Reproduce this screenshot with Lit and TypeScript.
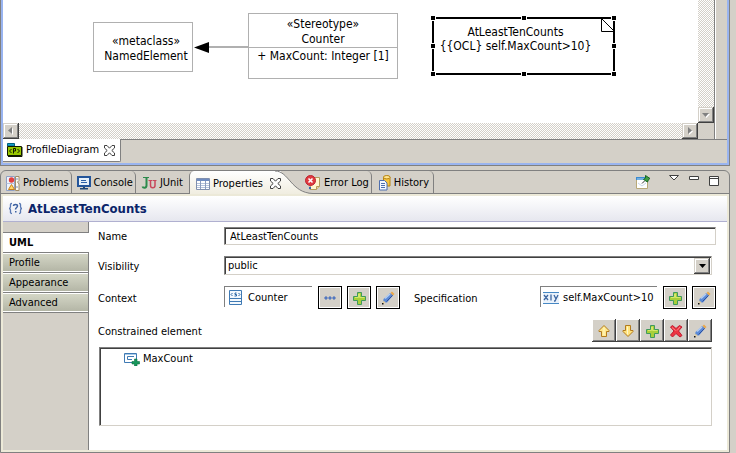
import { LitElement, html, css, svg, TemplateResult } from "lit";
import { customElement, state } from "lit/decorators.js";

const icon = (w: number, h: number, body: TemplateResult) =>
  html`<svg width=${w} height=${h} viewBox="0 0 ${w} ${h}" aria-hidden="true">${body}</svg>`;

const closeIcon = icon(11, 11, svg`
  <path d="M.5 .5h2.500L5.500 3.200 8 .500h2.500v2.500L7.800 5.500l2.700 2.500v2.500H8L5.500 7.800 3 10.500H.500V8l2.700-2.500L.500 3z" fill="#fff" stroke="#404040"/>`);

const plusIcon = icon(14, 14, svg`
  <path d="M5.500 1.500h4v4h4v4h-4v4h-4v-4h-4v-4h4z" fill="#a8cf38" stroke="#3f9a5c"/>
  <path d="M6.500 3v3.500H3M7.500 2.500v4h5" fill="none" stroke="#d5e86a"/>`);

const pencilIcon = icon(14, 14, svg`
  <path d="M2 11.500l.5-3.500 7-6 2.500 2.500-6 7z" fill="#5b8ad8"/>
  <path d="M4 7.500l5.500-5" stroke="#b5cef2" stroke-width="1.500"/>
  <path d="M5.500 10.500l6.500-6.500" stroke="#2f519c"/>
  <path d="M9.500 2l1.500-1.500 2.500 2.500-1.500 1.500z" fill="#eaa84a"/>
  <path d="M9 2.500l2.500 2.500" stroke="#7088b8"/>
  <path d="M2.500 9.500l2 2-3 1.500z" fill="#e6cf9c"/>
  <path d="M1 12h1.500v1.500H1z" fill="#111"/>`);

const dotsIcon = icon(14, 14, svg`
  <g fill="#7da3e6" stroke="#2d55a8" stroke-width=".8"><circle cx="3" cy="7" r="1.200"/><circle cx="7" cy="7" r="1.200"/><circle cx="11" cy="7" r="1.200"/></g>`);

const upIcon = icon(14, 14, svg`
  <path d="M7 1.500l5 5v1h-2.500v5h-5v-5H2v-1z" fill="#ffe88c" stroke="#b27a1c"/>
  <path d="M7 3.500v8" stroke="#fff8cc"/>`);

const downIcon = icon(14, 14, svg`
  <path d="M7 12.500l5-5v-1h-2.500v-5h-5v5H2v1z" fill="#ffe27c" stroke="#b27a1c"/>
  <path d="M6.500 2.500v8" stroke="#fff8cc"/>`);

const crossIcon = icon(14, 14, svg`
  <path d="M1.500 3l2-1.500L7 4.500l3.500-3 2.500 1.500-3.500 4 3.500 4.500-2 1.500L7 9.500l-3.500 3.500-2-2L5 7z" fill="#ee3440" stroke="#c01c30"/>
  <path d="M3 3.500l3.500 3M11 3l-3 3.500" stroke="#ff8a8a"/>`);

const profileIcon = icon(16, 14, svg`
  <path d="M.5 3V.5h7V3z" fill="#18a0c8" stroke="#006080"/>
  <path d="M.5 3.500h14v9H.5z" fill="#98c800" stroke="#101800"/>
  <path d="M15 4v9.500H1" fill="none" stroke="#101800"/>
  <path d="M4.500 6l-2 2 2 2M10.500 6l2 2-2 2M6.500 10.500v-5h2v2.500h-2" fill="none" stroke="#101800"/>`);

const problemsIcon = icon(14, 15, svg`
  <path d="M.5 .5h8v14h-8z" fill="#eef3fb" stroke="#8fa0c4"/>
  <path d="M.5 7.500h8" stroke="#b7c3dc"/>
  <path d="M9.500 .5h3.500v4l-1.500 1.500 1.500 2v6.500H9.500z" fill="#fdfbf2" stroke="#a08c68"/>
  <circle cx="5.500" cy="4" r="2.700" fill="#e24040"/>
  <path d="M5.500 8.500l3 5h-6z" fill="#ffd86a" stroke="#c8811c"/>
  <path d="M10 3h2M10 11h2" stroke="#7a92cc"/>`);

const consoleIcon = icon(14, 14, svg`
  <path d="M1 1h12v9H1z" fill="#e6f1fb" stroke="#24559a" stroke-width="2"/>
  <path d="M4 4.500h5M4 6.500h6" stroke="#2e62a8"/>
  <path d="M6 11h2v1h3v1.500H3V12h3z" fill="#204878"/>`);

const junitIcon = icon(16, 14, svg`
  <path d="M2 1.500h6M3 12.500" stroke="#2c8a4c"/>
  <path d="M5.500 2v7.500c0 3-3.500 2.500-4 1" fill="none" stroke="#2c8a4c" stroke-width="2"/>
  <path d="M7.500 4.500h4M12 4.500h3.500" stroke="#c8485c"/>
  <path d="M9.500 5v4.500c0 3 4.500 3 4.500 0V5" fill="none" stroke="#c8485c" stroke-width="1.500"/>`);

const tableIcon = icon(14, 12, svg`
  <path d="M.5 .5h13v11H.5z" fill="#fff" stroke="#7f8fae"/>
  <path d="M1 1h12v2H1z" fill="#6f8cc0"/>
  <path d="M1 5.500h12M1 7.500h12M1 9.500h12" stroke="#b3c2dc"/>
  <path d="M4.500 3v8M9.500 3v8" stroke="#8c9dbd"/>`);

const errorIcon = icon(16, 16, svg`
  <path d="M6 2.500h8.500v9l-3 3H5z" fill="#fff7cf" stroke="#b49a5c"/>
  <path d="M11.500 14.500v-3h3" fill="#e8d79a" stroke="#b49a5c"/>
  <circle cx="5.500" cy="5.500" r="5" fill="#e03a40" stroke="#bd2430"/>
  <path d="M3.500 3.500l4 4M7.500 3.500l-4 4" stroke="#fff" stroke-width="1.600"/>
  <path d="M4 12h2v2H4z" fill="#3a64b0"/>`);

const historyIcon = icon(12, 16, svg`
  <path d="M4.500 2v9h6.500V2z" fill="#f6c33c" stroke="#b88412"/>
  <ellipse cx="7.800" cy="2.200" rx="3.300" ry="1.700" fill="#ffe690" stroke="#b88412"/>
  <path d="M.5 5.500h5l2.500 2.500v7H.5z" fill="#f4f8ff" stroke="#4f6fae"/>
  <path d="M2 8.500h4M2 10.500h4M2 12.500h4" stroke="#4f6fae"/>`);

const pinIcon = icon(15, 14, svg`
  <path d="M.5 3.500h11v10H.5z" fill="#fff" stroke="#b8a878"/>
  <path d="M0 2h10v3H0z" fill="#3b8ad0"/><path d="M1 4h8" stroke="#a8d4f4"/>
  <path d="M2 8l4 3 4-3" fill="none" stroke="#c7d7ec"/>
  <path d="M9.500 .5l4.500 3-1.500 1-1 2.500L7.500 4.500l2-1.500z" fill="#3f9f42" stroke="#176624"/>
  <path d="M8.500 6L6 8.500" stroke="#333"/>`);

const braceIcon = icon(15, 13, svg`
  <g fill="none" stroke="#5878b4" stroke-width="1.300"><path d="M4 1.500c-2 0-1.500 1-1.500 3 0 1.200-.5 2-1.500 2 1 0 1.500.8 1.500 2 0 2-.5 3 1.500 3"/>
  <path d="M11 1.500c2 0 1.500 1 1.500 3 0 1.200.5 2 1.500 2-1 0-1.500.8-1.500 2 0 2 .5 3-1.500 3"/>
  <path d="M5.500 4c0-2 4-2 4 0 0 1.500-2 1.500-2 3.500" stroke="#3f62a2" stroke-width="1.500"/></g>
  <path d="M7 9h1.500v1.500H7z" fill="#3f62a2"/>`);

const stereotypeIcon = icon(13, 15, svg`
  <path d="M.5 .5h12v14H.5z" fill="#f3f9fe" stroke="#3f7ab4"/>
  <path d="M1 8.500h11M1 11.500h11" stroke="#3f7ab4"/>
  <path d="M3.500 3l-1.500 1.500 1.500 1.500M9.500 3L11 4.500 9.500 6M7.500 3h-1.500v1.500h1.500V6H5.500" fill="none" stroke="#2764a4"/>`);

const expressionIcon = icon(16, 12, svg`
  <path d="M0 0h16v12H0z" fill="#eaf2fb"/>
  <path d="M0 .5h16M0 11.500h16" stroke="#4688c4"/>
  <path d="M1 3l4 5M5 3L1 8M8 2.500v6M11 3l2 4M15 3l-3 6h-1" fill="none" stroke="#3d66a0" stroke-width="1.300"/>`);

const propertyIcon = icon(16, 13, svg`
  <path d="M.5 9.500v-9h12v6M.5 9.500H8" fill="none" stroke="#3f7ab4"/>
  <path d="M1 1.500h11" stroke="#a8cae8"/>
  <path d="M8 6.500H3.500v-3H10" fill="none" stroke="#3f7ab4"/>
  <path d="M10.500 6h2.500v2.500h2.500v2.500H13v2h-2.500v-2H8V8.500h2.500z" fill="#17975c" stroke="#0a7040" stroke-width=".6"/>`);

@customElement("app-root")
export class AppRoot extends LitElement {
  @state() private section = "UML";

  static styles = css`
    :host {
      display: flex; flex-direction: column; min-height: 100vh; box-sizing: border-box;
      background: #d4d0c8; color: #000; padding-right: 6px; gap: 4px;
      font: 11px/14px "DejaVu Sans Condensed", "DejaVu Sans", sans-serif;
    }
    * { box-sizing: border-box; }
    svg { display: block; flex: none; }
    button, input, select { font: inherit; color: inherit; margin: 0; padding: 0; border: 0; border-radius: 0; }
    button { background: none; white-space: nowrap; }

    .editor { border: solid #808080; border-width: 0 1px 1px; }
    .frame { border: solid #99b4f0; border-width: 0 2px 2px; }
    .pane { display: grid; grid-template-columns: 1fr 16px 13px; grid-template-rows: 123px 16px; }
    .canvas { position: relative; background: #fff; overflow: hidden; font-size: 12px; }
    .gutter { grid-column: 3; grid-row: 1 / 3; border-left: 1px solid #808080; box-shadow: inset 1px 0 #fff; }
    .track { background: repeating-conic-gradient(#d4d0c8 0 25%, #fff 0 50%) 0 0 / 2px 2px; display: flex; justify-content: space-between; }
    .track.vertical { flex-direction: column; justify-content: flex-end; }
    .raised {
      width: 16px; height: 16px; display: grid; place-items: center; background: #d4d0c8;
      box-shadow: inset -1px -1px #404040, inset 1px 1px #d4d0c8, inset -2px -2px #808080, inset 2px 2px #fff;
    }
    .filetabs { display: flex; height: 24px; }
    .filler { flex: 1; border-top: 1px solid #808080; }
    .filetab {
      display: flex; align-items: center; gap: 3px; background: #fff; padding: 0 5px 0 4px; height: 23px;
      border: solid #808080; border-width: 0 1px 1px 0; border-bottom-right-radius: 2px;
    }
    .filetab span { margin-right: 2px; }

    .node { position: absolute; background: #fff; border: 1px solid #b0b0b0; text-align: center; white-space: nowrap; }
    .meta { left: 90px; top: 22px; width: 100px; height: 50px; padding: 11px 0 0 6px; line-height: 15px; }
    .stereo { left: 245px; top: 13px; width: 150px; height: 66px; line-height: 15px; padding-top: 3px; }
    .attribute { border-top: 1px solid #b0b0b0; padding-top: 1px; }
    .link { position: absolute; left: 190px; top: 41px; }
    .note { left: 429px; top: 17px; width: 183px; height: 58px; border: 2px solid #000; padding: 6px 16px 0 0; }
    .fold { position: absolute; right: -2px; top: -1px; }
    .handle { position: absolute; width: 6px; height: 6px; background: #000; border: 1px solid #fff; }
    .handle.w { left: -4px; } .handle.c { left: 87px; } .handle.e { right: -4px; }
    .handle.n { top: -4px; } .handle.m { top: 24px; } .handle.s { bottom: -4px; }

    .view { flex: 1; display: flex; flex-direction: column; border: 1px solid #808080; border-radius: 6px 6px 0 0; }
    .tabs { display: flex; height: 23px; border-bottom: 1px solid #808080; }
    .tab { display: flex; align-items: center; gap: 3px; padding: 2px 2px 0 5px; height: 22px; border-right: 1px solid #808080; border-radius: 0 5px 0 0; }
    .tab.before { border-right: 0; padding-right: 6px; }
    .tab.left { border-radius: 0; }
    .active {
      display: flex; align-items: center; gap: 3px; height: 23px; padding: 2px 0 0 6px;
      background: linear-gradient(#fff, #f0ede0); border-left: 1px solid #808080; border-radius: 5px 0 0 0;
    }
    .active .close { margin-left: 4px; position: relative; z-index: 1; }
    .curve { margin-left: -6px; }
    .curve + .tab { margin-left: -14px; }
    .tab.last { padding: 2px 4px 0 7px; }
    .tools { margin-left: auto; display: flex; gap: 10px; padding: 4px 10px 0 0; align-items: flex-start; }
    .tools button:first-child { margin-right: 8px; }

    .body { flex: 1; display: flex; flex-direction: column; border: 2px solid #ece9d8; background: #fff; }
    .title {
      display: flex; align-items: center; gap: 5px; height: 26px; padding-left: 5px; margin: 0;
      background: linear-gradient(#fff, #e6e7ef); border-bottom: 1px solid #b0b0d0;
      color: #0a246a; font: bold 13px/16px "DejaVu Sans Condensed", "DejaVu Sans", sans-serif;
    }
    .columns { flex: 1; display: flex; }
    .sections { width: 86px; flex: none; background: #d4d0c8; display: flex; flex-direction: column; padding-top: 10px; box-shadow: inset -1px 0 #808080; }
    .section {
      height: 19px; margin: 1px 1px 0 0; text-align: left; padding-left: 6px;
      border: solid #fff; border-width: 1px 0; box-shadow: 0 -1px #808080;
      background: linear-gradient(#d4d6c6, #b4b6a6);
    }
    .section.on { background: #fff; font-weight: bold; margin-right: 0; }
    .section:last-child { box-shadow: 0 -1px #808080, 0 1px #808080; }

    .form { flex: 1; min-width: 0; padding: 5px 11px 24px 9px; display: flex; flex-direction: column; }
    .row { display: flex; align-items: center; }
    .label { width: 126px; flex: none; padding-top: 2px; }
    .sunken { border: 1px solid; border-color: #808080 #d4d0c8 #d4d0c8 #808080; box-shadow: inset 1px 1px #404040; background: #fff; }
    .name { flex: 1; min-width: 0; height: 18px; padding: 1px 0 0 5px; }
    .selectrow { margin: 11px 4px 11px 0; }
    .combo { flex: 1; position: relative; height: 19px; padding: 1px; }
    .combo select { appearance: none; width: 100%; height: 16px; padding-left: 2px; background: none; }
    .combo .raised { position: absolute; right: 1px; top: 1px; pointer-events: none; }
    .halves { display: grid; grid-template-columns: 1fr 1fr; gap: 14px; }
    .ref { flex: 1; min-width: 0; height: 21px; display: flex; align-items: center; gap: 6px; border: solid #808080; border-width: 1px 0 0 1px; padding: 1px 0 0 4px; margin-right: 6px; white-space: nowrap; align-self: flex-start; }
    .ref.tight { padding-left: 2px; gap: 4px; }
    .buttons { display: flex; gap: 5px; }
    .act { width: 24px; height: 23px; display: grid; place-items: center; background: #d4d0c8; border: 1px solid #000; box-shadow: inset 0 0 0 1px #fff; }
    .listhead { margin: 10px 4px 5px 0; justify-content: space-between; }
    .caption { padding-top: 2px; }
    .bar { display: flex; }
    .push {
      width: 24px; height: 23px; display: grid; place-items: center; background: #d4d0c8;
      box-shadow: inset -1px -1px #404040, inset 1px 1px #fff, inset -2px -2px #808080;
    }
    .list { list-style: none; margin: 0 4px 0 1px; padding: 3px 0 0 24px; flex: 1; min-height: 79px; }
    .item { display: flex; align-items: center; gap: 3px; height: 16px; }
  `;

  private handles() {
    return ["w n", "c n", "e n", "w m", "e m", "w s", "c s", "e s"].map((p) => html`<i class="handle ${p}"></i>`);
  }

  private arrow(label: string, d: string) {
    return html`<button class="raised" aria-label=${label}>${icon(8, 8, svg`<path d=${d} fill="#fff" transform="translate(1 1)"/><path d=${d} fill="#808080"/>`)}</button>`;
  }

  private act(label: string, glyph: TemplateResult, kind = "act") {
    return html`<button class=${kind} aria-label=${label}>${glyph}</button>`;
  }

  render() {
    return html`
      <section class="editor"><div class="frame">
        <div class="pane">
          <div class="canvas">
            <div class="node meta">«metaclass»<br>NamedElement</div>
            <svg class="link" width="56" height="13" viewBox="0 0 56 13"><path d="M14 6h42" stroke="#b0b0b0" stroke-width="2"/><path d="M1 6.500L16 1v11z" fill="#000"/></svg>
            <div class="node stereo">«Stereotype»<br>Counter<div class="attribute">+ MaxCount: Integer [1]</div></div>
            <div class="node note">AtLeastTenCounts<br>{{OCL} self.MaxCount&gt;10}
              <svg class="fold" width="14" height="14" viewBox="0 0 14 14"><path d="M.5 0v13.500H14M.5 .5L13.500 13.500" fill="none" stroke="#000"/></svg>
              ${this.handles()}
            </div>
          </div>
          <div class="track vertical">${this.arrow("Scroll down", "M0 2h7L3.500 6z")}</div>
          <div class="track">${this.arrow("Scroll left", "M5 0v7L1 3.500z")}${this.arrow("Scroll right", "M2 0v7l4-3.500z")}</div>
          <div></div>
          <div class="gutter"></div>
        </div>
        <div class="filetabs">
          <button class="filetab">${profileIcon}<span>ProfileDiagram</span>${closeIcon}</button>
          <div class="filler"></div>
        </div>
      </div></section>

      <section class="view">
        <div class="tabs">
          <button class="tab">${problemsIcon}Problems</button>
          <button class="tab">${consoleIcon}Console</button>
          <button class="tab before">${junitIcon}JUnit</button>
          <button class="active">${tableIcon}<span>Properties</span><span class="close">${closeIcon}</span></button>
          <svg class="curve" width="39" height="23" viewBox="0 0 39 23">
            <defs><linearGradient id="fade" x2="0" y2="1"><stop stop-color="#fff"/><stop offset="1" stop-color="#f0ede0"/></linearGradient></defs>
            <path d="M0 0C14 0 16 22 38 22.500V23H0z" fill="url(#fade)"/><path d="M0 0C14 0 16 22 38 22.500" fill="none" stroke="#808080"/>
          </svg>
          <button class="tab">${errorIcon}Error Log</button>
          <button class="tab last">${historyIcon}History</button>
          <div class="tools">
            <button aria-label="Pin">${pinIcon}</button>
            <button aria-label="View menu">${icon(10, 6, svg`<path d="M.5 .5h9L5 5z" fill="#fff" stroke="#404040"/>`)}</button>
            <button aria-label="Minimize">${icon(10, 6, svg`<path d="M.5 1.500h9v3h-9z" fill="#fff" stroke="#404040"/>`)}</button>
            <button aria-label="Maximize">${icon(10, 11, svg`<path d="M.5 1.500h9v9h-9zM0 3.500h10" fill="#fff" stroke="#404040"/>`)}</button>
          </div>
        </div>
        <div class="body">
          <h1 class="title">${braceIcon}AtLeastTenCounts</h1>
          <div class="columns">
            <nav class="sections">
              ${["UML", "Profile", "Appearance", "Advanced"].map((s) => html`
                <button class="section ${s === this.section ? "on" : ""}" @click=${() => (this.section = s)}>${s}</button>`)}
            </nav>
            <div class="form">
              <div class="row"><label class="label" for="name">Name</label><input id="name" class="name sunken" .value=${"AtLeastTenCounts"}></div>
              <div class="row selectrow"><label class="label" for="vis">Visibility</label>
                <div class="combo sunken">
                  <select id="vis"><option>public</option><option>private</option><option>protected</option><option>package</option></select>
                  <span class="raised">${icon(7, 4, svg`<path d="M0 0h7L3.500 4z"/>`)}</span>
                </div>
              </div>
              <div class="halves">
                <div class="row"><span class="label">Context</span><div class="ref">${stereotypeIcon}Counter</div>
                  <div class="buttons">${this.act("Browse", dotsIcon)}${this.act("Add context", plusIcon)}${this.act("Edit context", pencilIcon)}</div></div>
                <div class="row"><span class="label">Specification</span><div class="ref tight">${expressionIcon}self.MaxCount&gt;10</div>
                  <div class="buttons">${this.act("Add specification", plusIcon)}${this.act("Edit specification", pencilIcon)}</div></div>
              </div>
              <div class="row listhead"><span class="caption">Constrained element</span>
                <div class="bar">${this.act("Up", upIcon, "push")}${this.act("Down", downIcon, "push")}${this.act("Add", plusIcon, "push")}${this.act("Remove", crossIcon, "push")}${this.act("Edit", pencilIcon, "push")}</div>
              </div>
              <ul class="list sunken"><li class="item">${propertyIcon}MaxCount</li></ul>
            </div>
          </div>
        </div>
      </section>`;
  }
}
